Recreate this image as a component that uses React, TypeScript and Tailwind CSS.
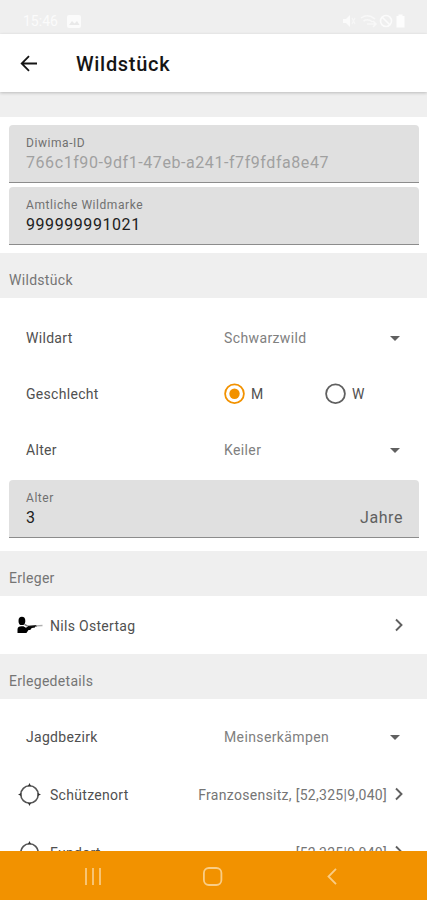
import { useState } from "react";
import type { ReactNode } from "react";

type FieldProps = {
  label: string;
  value: string;
  suffix?: string;
  disabled?: boolean;
};

// Filled text field with floating label
function Field({ label, value, suffix, disabled }: FieldProps) {
  return (
    <div className="mr-[8px] ml-[9px] h-[58px] shrink-0 rounded-t-[4px] border-b border-[#8c8c8c] bg-[#e0e0e0] pt-[10px] pr-[16px] pl-[17px]">
      <div className="text-[12px] leading-[16px] tracking-[0.56px] text-[#707070]">
        {label}
      </div>
      <div
        className={`flex justify-between pt-[1px] text-[16px] leading-[22px] tracking-[0.57px] ${
          disabled ? "text-[#a0a0a0]" : "text-[#202020]"
        }`}
      >
        <span>{value}</span>
        {suffix && <span className="text-[#606060]">{suffix}</span>}
      </div>
    </div>
  );
}

// Grey section header
function SectionHeader({ title }: { title: string }) {
  return (
    <div className="h-[45px] shrink-0 bg-[#efefef] px-[9px] pt-[17px] text-[14px] leading-[20px] tracking-[0.3px] text-[#757575]">
      {title}
    </div>
  );
}

// Label on the left, any control on the right
function FormRow({ label, children }: { label: string; children: ReactNode }) {
  return (
    <div className="flex h-[56px] shrink-0 items-center pr-[26px] pl-[26px] text-[14px] tracking-[0.3px] text-[#505050]">
      <span className="w-[198px] shrink-0">{label}</span>
      {children}
    </div>
  );
}

function SelectValue({ value }: { value: string }) {
  return (
    <div className="flex flex-1 items-center justify-between tracking-[0.38px] text-[#808080]">
      <span>{value}</span>
      <svg width="10" height="5" viewBox="0 0 10 5" className="mr-[1px]">
        <path d="M0 0h10L5 5z" fill="#606060" />
      </svg>
    </div>
  );
}

type RadioProps = { label: string; checked: boolean; onSelect: () => void };

function Radio({ label, checked, onSelect }: RadioProps) {
  return (
    <button
      onClick={onSelect}
      className="flex w-[101px] shrink-0 items-center gap-[6px]"
    >
      <svg width="21" height="22" viewBox="0 0 21 22" fill="none">
        <circle
          cx="10.5"
          cy="10.7"
          r="9.4"
          stroke={checked ? "#f29200" : "#606060"}
          strokeWidth="1.8"
        />
        {checked && <circle cx="10.5" cy="10.7" r="5.2" fill="#f29200" />}
      </svg>
      <span>{label}</span>
    </button>
  );
}

function ChevronRight() {
  return (
    <svg width="8" height="14" viewBox="0 0 8 14" fill="none" className="mb-[1px] ml-[8px]">
      <path d="M1 1.5L6.5 7L1 12.5" stroke="#606060" strokeWidth="1.9" />
    </svg>
  );
}

function HunterIcon() {
  return (
    <svg width="27" height="18" viewBox="0 0 27 18" className="mb-[1px]">
      <ellipse cx="4.9" cy="4.9" rx="3.4" ry="4.2" fill="#000" />
      <path
        d="M.5 17v-3.400C.5 11.200 2 10.200 4.400 10.200h2l2.500 1.500 2.600-1.500 6.500-.2v1.500l-3.200.5-1.600 2.100-1.700-.2-2.100 3.100z"
        fill="#000"
      />
      <path d="M7.500 8.400l3.500 2" stroke="#777" strokeWidth="1.3" />
      <path d="M11 10.600l9-.8" stroke="#111" strokeWidth="1.5" />
      <path d="M19 9.900l6.500-.4" stroke="#b0b0b0" strokeWidth="1.3" />
    </svg>
  );
}

function TargetIcon() {
  return (
    <svg width="23" height="23" viewBox="0 0 23 23" fill="none" className="ml-[1px]">
      <circle cx="11.5" cy="11.5" r="8.7" stroke="#555" strokeWidth="1.6" />
      <path
        d="M11.5 0l1.600 3.300h-3.200zM11.500 23l1.600-3.300h-3.200zM0 11.500l3.300-1.600v3.200zM23 11.500l-3.300-1.600v3.200z"
        fill="#333"
      />
    </svg>
  );
}

type LinkRowProps = { icon: ReactNode; label: string; value?: string };

// Tappable row with icon and chevron
function LinkRow({ icon, label, value }: LinkRowProps) {
  return (
    <div className="flex h-[58px] shrink-0 items-center pt-[1px] pr-[24px] pl-[17px] text-[14px] tracking-[0.3px] text-[#505050]">
      <div className="w-[33px]">{icon}</div>
      <span className="flex-1 pt-[1px]">{label}</span>
      {value && <span className="pt-[1px] text-[#757575]">{value}</span>}
      <ChevronRight />
    </div>
  );
}

function StatusBar() {
  return (
    <div className="flex h-[34px] shrink-0 items-center bg-[#efefef] pt-[8px] pr-[21px] pl-[23px] text-[14px] text-[#fbfbfb]">
      <span className="w-[44px]">15:46</span>
      <svg width="14" height="13" viewBox="0 0 14 13">
        <rect width="14" height="13" rx="2" fill="#fbfbfb" />
        <path d="M2 10l3-4 2.5 2.5L10 6l2.5 4z" fill="#e9e9e9" />
      </svg>
      <svg width="64" height="14" viewBox="0 0 64 14" fill="none" className="ml-auto">
        <path d="M1 5h3l4-4v12l-4-4H1z" fill="#fbfbfb" />
        <path d="M10 4l3 6M13 4l-3 6" stroke="#f6f6f6" strokeWidth="1.2" />
        <path
          d="M19 4q7-5 14 1M21.5 7q5-3 9 1M25 10h9M31 7l3 3-3 3"
          stroke="#f8f8f8"
          strokeWidth="1.5"
        />
        <circle cx="44" cy="7" r="5.5" stroke="#fbfbfb" strokeWidth="1.6" />
        <path d="M40 3l8 8" stroke="#fbfbfb" strokeWidth="1.6" />
        <path d="M54.5 2h2V.5h4V2h2v11.5h-8z" fill="#fdfdfd" />
      </svg>
    </div>
  );
}

function NavBar() {
  return (
    <div className="flex h-[49px] shrink-0 items-center bg-[#f29200] pt-[2px] pl-[85px]">
      <svg width="16" height="17" viewBox="0 0 16 17" fill="none">
        <path d="M1 0v17M8 0v17M15 0v17" stroke="#f9cd86" strokeWidth="1.7" />
      </svg>
      <svg width="20" height="19" viewBox="0 0 20 19" fill="none" className="ml-[102px]">
        <rect x=".9" y="1" width="17.5" height="17" rx="5" stroke="#f9cd86" strokeWidth="1.8" />
      </svg>
      <svg width="10" height="17" viewBox="0 0 10 17" fill="none" className="ml-[104px]">
        <path d="M9 .8L1.5 8.5L9 16.2" stroke="#f9cd86" strokeWidth="1.8" />
      </svg>
    </div>
  );
}

export default function App() {
  // Selected sex
  const [sex, setSex] = useState("M");

  return (
    <div className="flex h-[900px] w-[427px] flex-col overflow-hidden bg-white font-[Roboto,sans-serif]">
      <StatusBar />

      {/* App bar */}
      <div className="z-10 flex h-[58px] shrink-0 items-center bg-white pl-[20px] shadow-[0_1px_3px_rgba(0,0,0,0.22)]">
        <svg width="18" height="17" viewBox="0 0 18 17" fill="none">
          <path
            d="M17 8.5H2M9 1.2L1.7 8.5L9 15.8"
            stroke="#151515"
            strokeWidth="1.8"
          />
        </svg>
        <h1 className="ml-[38px] pt-[2px] text-[20px] font-medium tracking-[0.7px] text-[#151515]">
          Wildstück
        </h1>
      </div>

      {/* Form */}
      <div className="flex flex-1 flex-col overflow-hidden">
        <div className="h-[25px] shrink-0 bg-[#efefef]" />
        <div className="flex shrink-0 flex-col gap-[4px] pt-[8px] pb-[8px]">
          <Field label="Diwima-ID" value="766c1f90-9df1-47eb-a241-f7f9fdfa8e47" disabled />
          <Field label="Amtliche Wildmarke" value="999999991021" />
        </div>

        <SectionHeader title="Wildstück" />
        <div className="flex shrink-0 flex-col pt-[12px] pb-[13px]">
          <FormRow label="Wildart">
            <SelectValue value="Schwarzwild" />
          </FormRow>
          <FormRow label="Geschlecht">
            <Radio label="M" checked={sex === "M"} onSelect={() => setSex("M")} />
            <Radio label="W" checked={sex === "W"} onSelect={() => setSex("W")} />
          </FormRow>
          <FormRow label="Alter">
            <SelectValue value="Keiler" />
          </FormRow>
          <div className="h-[2px]" />
          <Field label="Alter" value="3" suffix="Jahre" />
        </div>

        <SectionHeader title="Erleger" />
        <LinkRow icon={<HunterIcon />} label="Nils Ostertag" />

        <SectionHeader title="Erlegedetails" />
        <div className="flex shrink-0 flex-col pt-[10px]">
          <FormRow label="Jagdbezirk">
            <SelectValue value="Meinserkämpen" />
          </FormRow>
          <LinkRow
            icon={<TargetIcon />}
            label="Schützenort"
            value="Franzosensitz, [52,325|9,040]"
          />
          <LinkRow icon={<TargetIcon />} label="Fundort" value="[52,325|9,040]" />
        </div>
      </div>

      <NavBar />
    </div>
  );
}
